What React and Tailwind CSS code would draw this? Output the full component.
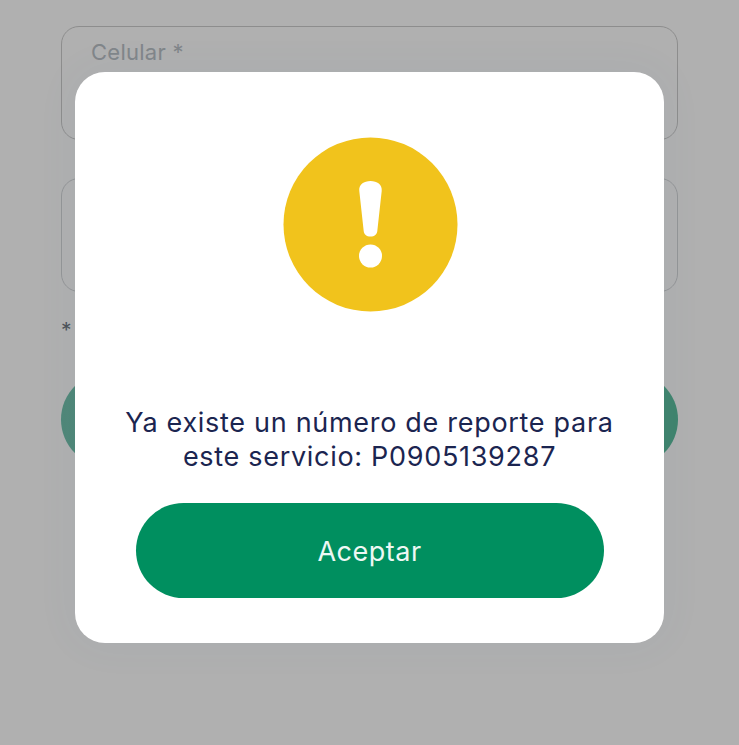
export default function App() {
  const font = { fontFamily: "Inter, 'Liberation Sans', sans-serif" };
  return (
    <div style={font} className="relative h-[745px] w-[739px] overflow-hidden bg-white">
      <div className="flex flex-col px-[61px] pt-[26px]">
        <div className="h-[114px] rounded-[18px] border border-[#cdcdcd] pl-[29px] pt-[10px] text-[22px] leading-[30px] tracking-[0.25px] text-[#bcc2c8]">Celular *</div>
        <div className="mt-[38px] h-[114px] rounded-[18px] border border-[#d6d8da]"></div>
        <div className="mt-[25px] h-[28px] text-[21px] leading-[28px] text-[#6f7782]">*</div>
        <div className="mt-[27px] h-[95px] rounded-full bg-gradient-to-r from-[#74c4ae] via-[#5cc09f] to-[#5cc09f]"></div>
      </div>
      <div className="absolute inset-0 bg-[#000000]/[0.31]"></div>
      <div className="absolute left-[75px] top-[72px] flex h-[571px] w-[589px] flex-col items-center rounded-[30px] bg-white pt-[65px] shadow-[0_0_40px_rgba(90,130,170,0.07)]">
        <svg className="ml-[1px]" width="175" height="175" viewBox="0 0 175 175" aria-hidden="true">
          <circle cx="87.5" cy="87.5" r="87" fill="#f1c31c" />
          <path d="M76.300 54C75.500 47.500 81 44 87.500 44S99.500 47.500 98.700 54L94.300 94C94 97.500 91.500 99.500 87.500 99.500S81 97.500 80.700 94Z" fill="#ffffff" />
          <circle cx="87.500" cy="119" r="11.500" fill="#ffffff" />
        </svg>
        <p className="mt-[94px] w-[510px] text-center text-[27px] leading-[34px] tracking-[0.7px] text-[#1b2550]">
          Ya existe un número de reporte para este servicio: P0905139287
        </p>
        <button className="mt-[29px] flex h-[95px] w-[468px] items-center justify-center rounded-full bg-[#008f5f] pt-[3px] text-[27px] tracking-[0.5px] text-[#eef8f4]">
          Aceptar
        </button>
      </div>
    </div>
  );
}
